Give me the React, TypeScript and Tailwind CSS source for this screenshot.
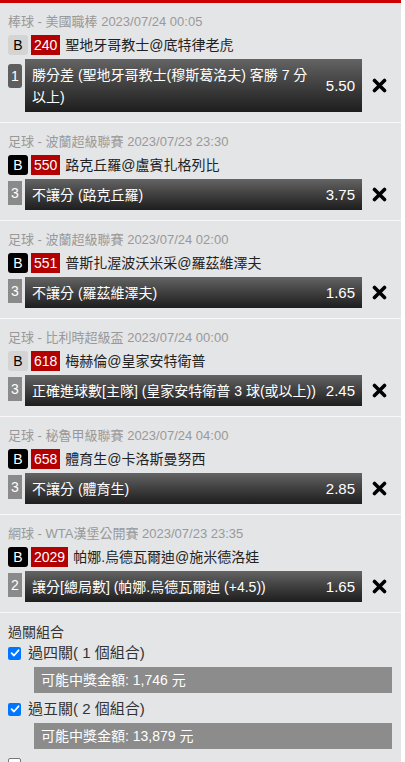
import React from "react";

interface Bet {
  league: string;
  lightB: boolean;
  code: string;
  match: string;
  num: string;
  roundNum?: boolean;
  pick: string;
  odds: string;
}

const bets: Bet[] = [
  {
    league: "棒球 - 美國職棒 2023/07/24 00:05",
    lightB: true,
    code: "240",
    match: "聖地牙哥教士@底特律老虎",
    num: "1",
    roundNum: true,
    pick: "勝分差 (聖地牙哥教士(穆斯葛洛夫) 客勝 7 分\n以上)",
    odds: "5.50",
  },
  {
    league: "足球 - 波蘭超級聯賽 2023/07/23 23:30",
    lightB: false,
    code: "550",
    match: "路克丘羅@盧賓扎格列比",
    num: "3",
    pick: "不讓分 (路克丘羅)",
    odds: "3.75",
  },
  {
    league: "足球 - 波蘭超級聯賽 2023/07/24 02:00",
    lightB: false,
    code: "551",
    match: "普斯扎渥波沃米采@羅茲維澤夫",
    num: "3",
    pick: "不讓分 (羅茲維澤夫)",
    odds: "1.65",
  },
  {
    league: "足球 - 比利時超級盃 2023/07/24 00:00",
    lightB: true,
    code: "618",
    match: "梅赫倫@皇家安特衛普",
    num: "3",
    pick: "正確進球數[主隊] (皇家安特衛普 3 球(或以上))",
    odds: "2.45",
  },
  {
    league: "足球 - 秘魯甲級聯賽 2023/07/24 04:00",
    lightB: false,
    code: "658",
    match: "體育生@卡洛斯曼努西",
    num: "3",
    pick: "不讓分 (體育生)",
    odds: "2.85",
  },
  {
    league: "網球 - WTA漢堡公開賽 2023/07/23 23:35",
    lightB: false,
    code: "2029",
    match: "帕娜.烏德瓦爾迪@施米德洛娃",
    num: "2",
    pick: "讓分[總局數] (帕娜.烏德瓦爾迪 (+4.5))",
    odds: "1.65",
  },
];

const combos = [
  { label: "過四關( 1 個組合)", amount: "可能中獎金額: 1,746 元", checked: true },
  { label: "過五關( 2 個組合)", amount: "可能中獎金額: 13,879 元", checked: true },
];

function CloseIcon() {
  return (
    <svg width="15" height="15" viewBox="0 0 15 15" className="shrink-0">
      <path
        d="M2.5 2.5 L12.5 12.5 M12.5 2.5 L2.5 12.5"
        stroke="#000"
        strokeWidth="3.6"
        strokeLinecap="round"
      />
    </svg>
  );
}

function Checkbox({ checked }: { checked: boolean }) {
  if (!checked) {
    return (
      <span className="w-[13px] h-[13px] rounded-[2px] border border-[#767676] bg-white shrink-0" />
    );
  }
  return (
    <span className="w-[13px] h-[13px] rounded-[2px] bg-[#0075ff] flex items-center justify-center shrink-0">
      <svg width="10" height="10" viewBox="0 0 10 10">
        <path
          d="M1.6 5.2 L4 7.5 L8.5 2.3"
          stroke="#fff"
          strokeWidth="1.8"
          fill="none"
          strokeLinecap="round"
          strokeLinejoin="round"
        />
      </svg>
    </span>
  );
}

export default function App() {
  return (
    <div
      className="w-[401px] bg-[#e4e5e7] min-h-[762px]"
      style={{ fontFamily: '"Liberation Sans", "Noto Sans CJK TC", sans-serif' }}
    >
      <div className="h-[3px] bg-[#cc0000]" />

      {bets.map((b, i) => (
        <div key={i} className="px-[8px] pt-[10px] pb-[10px] border-b border-[#f8f8f8]">
          <div className="text-[13px] leading-[18px] text-[#999]">{b.league}</div>

          {/* match row */}
          <div className="flex items-center mt-[4px] h-[20px]">
            <span
              className={`w-[20px] h-[20px] rounded-[3px] flex items-center justify-center text-[14px] ${
                b.lightB ? "bg-[#d4d4d4] text-black" : "bg-black text-white"
              }`}
            >
              B
            </span>
            <span className="ml-[3px] h-[20px] px-[3px] bg-[#b30000] text-white text-[14px] leading-[20px]">
              {b.code}
            </span>
            <span className="ml-[5px] text-[14px] text-[#222] leading-[20px]">{b.match}</span>
          </div>

          {/* pick row */}
          <div className="flex items-center mt-[4px]">
            <div className="flex items-start">
              <span
                className={`w-[14px] h-[24px] flex items-center justify-center text-white text-[14px] ${
                  b.roundNum ? "bg-[#5e5e5e] rounded-[3px] mt-[5px]" : "bg-[#8a8a8a] mt-[2px]"
                }`}
              >
                {b.num}
              </span>
              <div className="ml-[3px] w-[337px] flex items-center justify-between pl-[7px] pr-[7px] py-[4.5px] bg-gradient-to-b from-[#646464] to-[#1e1e1e]">
                <span className="text-white text-[14px] leading-[22px] whitespace-pre">{b.pick}</span>
                <span className="text-white text-[15px] leading-[22px] shrink-0">{b.odds}</span>
              </div>
            </div>
            <span className="ml-[10px]">
              <CloseIcon />
            </span>
          </div>
        </div>
      ))}

      {/* combos */}
      <div className="px-[8px] pt-[9px]">
        <div className="text-[14px] leading-[20px] text-[#333]">過關組合</div>
        {combos.map((c, i) => (
          <div key={i} className={i === 0 ? "" : "mt-[5px]"}>
            <div className="flex items-center h-[22px]">
              <Checkbox checked={c.checked} />
              <span className="ml-[7px] text-[15px] text-[#333]">{c.label}</span>
            </div>
            <div className="ml-[26px] mt-[3px] h-[26px] w-[358px] bg-[#8c8c8c] text-white text-[14px] leading-[26px] pl-[7px]">
              {c.amount}
            </div>
          </div>
        ))}
        <div className="flex items-start h-[22px] mt-[5px] pt-[4px]">
          <Checkbox checked={false} />
        </div>
      </div>
    </div>
  );
}
